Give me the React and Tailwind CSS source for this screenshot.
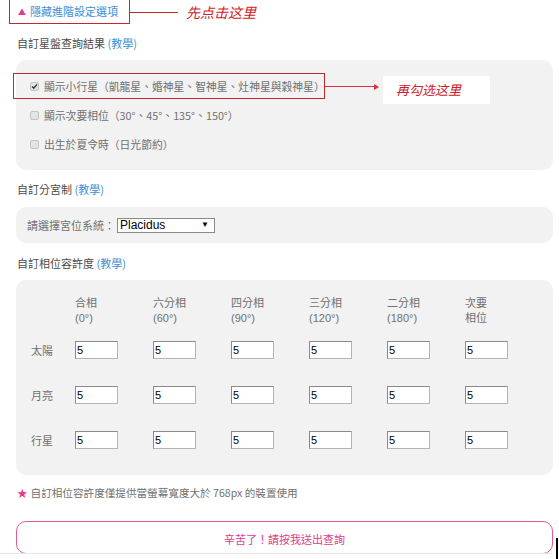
import React from "react";

const cols = [
  ["合相", "(0°)"],
  ["六分相", "(60°)"],
  ["四分相", "(90°)"],
  ["三分相", "(120°)"],
  ["二分相", "(180°)"],
  ["次要", "相位"],
];

const rows = ["太陽", "月亮", "行星"];

const options = [
  { label: "顯示小行星（凱龍星、婚神星、智神星、灶神星與穀神星）", checked: true },
  { label: "顯示次要相位（30°、45°、135°、150°）", checked: false },
  { label: "出生於夏令時（日光節約）", checked: false },
];

// small greyish checkbox like the legacy browser one
const Box = ({ checked }) => (
  <span className="w-[9px] h-[9px] border border-[#c4c4c4] bg-[#e4e4e4] rounded-[2px] flex items-center justify-center">
    {checked && (
      <svg width="7" height="7" viewBox="0 0 7 7">
        <path d="M1 3.6 L2.8 5.3 L6 1.4" stroke="#333" strokeWidth="1.4" fill="none" />
      </svg>
    )}
  </span>
);

const Heading = ({ text, className }) => (
  <div className={`h-[16px] leading-[16px] text-[#4a4a4a] pl-[17px] ${className}`}>
    {text} <span className="text-[#3d8fd6]">(教學)</span>
  </div>
);

const NumInput = () => (
  <div className="w-[43px] h-[18px] bg-white border border-[#b4b4b4] border-t-[#8a8a8a] border-l-[#8a8a8a] font-['Liberation_Sans',sans-serif] text-[11px] leading-[16px] text-black pl-[1px]">
    5
  </div>
);

export default function App() {
  return (
    <div className="w-[559px] h-[559px] overflow-hidden bg-white relative font-['Noto_Sans_CJK_TC',sans-serif] text-[11px] text-[#707070]">
      {/* top toggle + note */}
      <div className="flex items-center h-[24px] pl-[9px]">
        <div className="h-[25px] -mt-px border border-[#c0282d] pl-[8px] pr-[11px] flex items-center gap-[4px]">
          <span className="text-[#e03c8a] text-[8px]">▲</span>
          <span className="text-[#3d8fd6]">隱藏進階設定選項</span>
        </div>
        <div className="w-[48px] h-px bg-[#c0282d]" />
        <span className="ml-[8px] italic text-[#d0202a] text-[14px]">先点击这里</span>
      </div>

      <Heading text="自訂星盤查詢結果" className="mt-[11px]" />

      <div className="relative mt-[9px] ml-[16px] w-[537px] h-[110px] bg-[#f2f2f2] rounded-[10px] pt-[12px]">
        {options.map((o) => (
          <div key={o.label} className="h-[29px] flex items-center pl-[14px] gap-[5px] text-[10.8px]">
            <Box checked={o.checked} />
            <span>{o.label}</span>
          </div>
        ))}
        {/* annotation over first option */}
        <div className="absolute left-[-3px] top-[13px] w-[312px] h-[26px] border border-[#c0282d]" />
        <div className="absolute left-[309px] top-[26px] w-[51px] h-px bg-[#e0303a]" />
        <div className="absolute left-[358px] top-[24px] w-0 h-0 border-y-[3px] border-y-transparent border-l-[5px] border-l-[#e0303a]" />
        <div className="absolute left-[367px] top-[16px] w-[107px] h-[28px] bg-white flex items-center pl-[13px] italic text-[#d0202a] text-[13px]">
          再勾选这里
        </div>
      </div>

      <Heading text="自訂分宮制" className="mt-[11px]" />

      <div className="mt-[10px] ml-[16px] w-[537px] h-[36px] bg-[#f2f2f2] rounded-[10px] flex items-center pl-[11px]">
        <span>請選擇宮位系統：</span>
        <div className="ml-[2px] w-[98px] h-[15px] bg-white border border-[#8a8a8a] flex items-center justify-between pl-[2px] pr-[5px] font-['Liberation_Sans',sans-serif] text-[12px] text-black">
          <span>Placidus</span>
          <span className="text-[8px]">▼</span>
        </div>
      </div>

      <Heading text="自訂相位容許度" className="mt-[12px]" />

      <div className="mt-[9px] ml-[16px] w-[537px] h-[195px] bg-[#f2f2f2] rounded-[10px] pt-[14px] pl-[15px]">
        <div className="grid grid-cols-[44px_repeat(6,78px)] leading-[16px]">
          <div />
          {cols.map(([a, b]) => (
            <div key={a + b}>
              <div>{a}</div>
              <div className="font-['Liberation_Sans','Noto_Sans_CJK_TC',sans-serif]">{b}</div>
            </div>
          ))}
        </div>
        <div className="mt-[15px] flex flex-col gap-[27px]">
          {rows.map((r) => (
            <div key={r} className="grid grid-cols-[44px_repeat(6,78px)] items-center h-[18px]">
              <div>{r}</div>
              {cols.map(([a]) => (
                <NumInput key={a} />
              ))}
            </div>
          ))}
        </div>
      </div>

      <div className="mt-[10px] pl-[17px] h-[16px] leading-[16px] flex items-center gap-[3px] text-[10.6px]">
        <span className="text-[#e03c8a]">★</span>
        <span>自訂相位容許度僅提供當螢幕寬度大於 768px 的裝置使用</span>
      </div>

      <button className="mt-[20px] ml-[16px] w-[537px] h-[33px] border border-[#e05aa0] rounded-[10px] pt-[4px] text-[#e03c8a] text-[11px] flex items-center justify-center">
        辛苦了！請按我送出查詢
      </button>

      <div className="absolute left-0 top-[553px] w-[553px] h-px bg-[#e6e6e6]" />
      <div className="absolute left-[556px] top-[538px] w-[2px] h-[21px] bg-black" />
    </div>
  );
}
